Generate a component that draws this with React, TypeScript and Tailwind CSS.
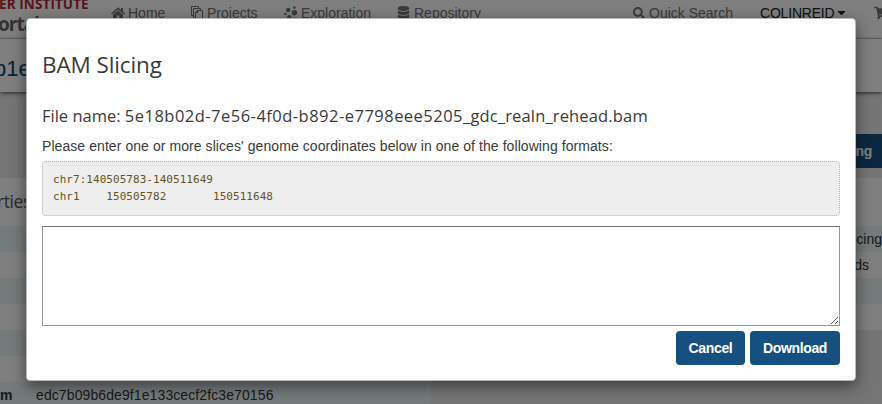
import type { ReactNode } from "react";
import { FaDatabase, FaSearch, FaCaretDown, FaShoppingCart } from "react-icons/fa";

const heading = "font-['Open_Sans',sans-serif]";

function HomeIcon() {
  return (
    <svg width="14" height="12" viewBox="0 0 14 12" fill="currentColor">
      <path d="M7 .3 10 2.9V1h2v3.6l2 1.8-1 1.1L7 2.4 1 7.5 0 6.4z" />
      <path d="M7 3.5 12 7.8V12H8.3V8.5H5.7V12H2V7.8z" />
    </svg>
  );
}

function PagesIcon() {
  return (
    <svg width="13" height="14" viewBox="0 0 13 14" fill="none" stroke="currentColor" strokeWidth="1">
      <path d="M6.5 4.5h5v9h-7v-7z M6.5 4.5v2h-2 M4.5 11.5h-2v-9h7v2 M2.5 9.5h-2v-9h7v2" />
    </svg>
  );
}

function DotsIcon() {
  return (
    <svg width="14" height="14" viewBox="0 0 14 14" fill="currentColor">
      <circle cx="4.2" cy="4" r="2.2" />
      <circle cx="10.4" cy="6.7" r="2.7" />
      <circle cx="5.2" cy="11.2" r="2.2" />
      <circle cx="10.4" cy="1.6" r="1.3" />
      <circle cx="1.3" cy="7.9" r="1.2" />
      <circle cx="10.4" cy="12.4" r="1.2" />
    </svg>
  );
}

function NavItem({ icon, label, className }: { icon: ReactNode; label: string; className: string }) {
  return (
    <div className={`flex shrink-0 items-center text-[14px] leading-4 whitespace-nowrap ${className}`}>
      {icon}
      <span>{label}</span>
    </div>
  );
}

function Page() {
  return (
    <div className="flex h-full flex-col overflow-hidden bg-[#ebebeb]">
      <header className="flex h-[39px] shrink-0 border-b border-[#dcdcdc] bg-white text-[#747474]">
        <div className="-mt-[5px] w-[111px] shrink-0 whitespace-nowrap font-['Open_Sans',sans-serif] font-bold">
          <div className="-ml-[1px] text-[13.5px] leading-[18px] tracking-[0.1px] text-[#b52638]">ER INSTITUTE</div>
          <div className="-ml-[2px] text-[19px] leading-[22px] tracking-[-1px] text-[#666]">ortal</div>
        </div>
        <nav className="flex h-[25px] flex-1 items-center">
          <NavItem className="w-[80px] gap-[3px]" icon={<HomeIcon />} label="Home" />
          <NavItem className="w-[93px] gap-[3px]" icon={<PagesIcon />} label="Projects" />
          <NavItem className="w-[113px] gap-[3px]" icon={<DotsIcon />} label="Exploration" />
          <NavItem className="w-[236px] gap-[4px]" icon={<FaDatabase size={13} />} label="Repository" />
          <NavItem className="w-[127px] gap-[4px]" icon={<FaSearch size={12} />} label="Quick Search" />
          <div className="flex w-[114px] shrink-0 items-center gap-[1px] text-[14px] leading-4 text-[#222]">
            <span className="tracking-[-0.2px]">COLINREID</span>
            <FaCaretDown size={13} />
          </div>
          <FaShoppingCart size={14} className="shrink-0" />
        </nav>
      </header>
      <div className="h-[53px] shrink-0 bg-white pt-[16px] text-[22px] leading-[28px] text-[#00497e] shadow-[0_1px_4px_rgba(0,0,0,0.7)]">
        <div className="-ml-[6px]">b1e</div>
      </div>
      <div className="flex h-[86px] shrink-0 items-start justify-end pt-[42px]">
        <div className="flex h-[34px] w-[120px] items-center justify-end bg-[#165080] pr-[10px] text-[14px] font-bold tracking-[-0.3px] text-white">
          Slicing
        </div>
      </div>
      <div className="flex shrink-0 items-start justify-between">
        <section className="w-[431px] bg-white">
          <h2 className={`h-[48px] pt-[10px] text-[17.5px] leading-[26px] tracking-[-0.4px] text-[#555] ${heading}`}>
            <span className="-ml-[3px]">rties</span>
          </h2>
          {[0, 1, 2].map((n) => (
            <div key={n}>
              <div className="h-[26px] bg-[#eaf4f5]" />
              <div className="h-[26px]" />
            </div>
          ))}
          <div className="flex h-[26px] bg-[#eaf4f5] text-[14px] leading-[26px] text-[#333]">
            <b className="w-[36px]">m</b>
            <span className="tracking-[0.1px]">edc7b09b6de9f1e133cecf2fc3e70156</span>
          </div>
        </section>
        <section className="w-[431px] bg-white pt-[48px] text-[14px] leading-[26px] text-[#333]">
          <div className="flex h-[26px] justify-end bg-[#eaf4f5]">Sequencing</div>
          <div className="flex h-[26px] justify-end pr-[13px]">Aligned Reads</div>
          <div className="h-[26px] bg-[#eaf4f5]" />
          <div className="h-[26px]" />
        </section>
      </div>
    </div>
  );
}

const button = "h-[34px] rounded-[4px] bg-[#165080] text-center text-[14px] font-bold tracking-[-0.35px] text-white";

function SlicingDialog() {
  return (
    <div className="flex h-[363px] w-[830px] flex-col rounded-[4px] border border-[#b8b8b8] bg-white px-[15px] text-[#3a3a3a] shadow-[0_5px_15px_rgba(0,0,0,0.5)]">
      <h1 className={`mt-[28px] h-[36px] text-[22.5px] leading-[36px] tracking-[-0.1px] whitespace-nowrap ${heading}`}>BAM Slicing</h1>
      <h2 className={`mt-[21px] h-[24px] text-[16.5px] leading-[24px] whitespace-nowrap ${heading}`}>
        File name: <span className="tracking-[0.48px]">5e18b02d-7e56-4f0d-b892-e7798eee5205</span>
        <span className="tracking-[0.15px]">_gdc_realn_rehead.bam</span>
      </h2>
      <p className="mt-[8px] h-[20px] text-[14px] leading-[20px] tracking-[0.07px] whitespace-nowrap">
        Please enter one or more slices' genome coordinates below in one of the following formats:
      </p>
      <pre className="mt-[5px] h-[55px] rounded-[4px] border border-dotted border-[#b4b4b4] bg-[#eee] px-[10px] pt-[9px] font-['DejaVu_Sans_Mono',monospace] text-[11px] leading-[17px] tracking-[0.045px] text-[#65531c] [tab-size:8]">
        {"chr7:140505783-140511649\nchr1\t150505782\t150511648"}
      </pre>
      <textarea className="mt-[10px] block h-[100px] w-full shrink-0 resize border border-[#999] border-t-[#707070] bg-white outline-none" />
      <div className="mt-[5px] flex justify-end gap-[5px]">
        <button className={`w-[69px] ${button}`}>Cancel</button>
        <button className={`w-[90px] ${button}`}>Download</button>
      </div>
    </div>
  );
}

export default function App() {
  return (
    <main className="relative h-[404px] w-[882px] overflow-hidden font-['Liberation_Sans',Arial,sans-serif]">
      <Page />
      <div className="absolute inset-0 bg-black/50 pt-[18px] pl-[26px]">
        <SlicingDialog />
      </div>
    </main>
  );
}
